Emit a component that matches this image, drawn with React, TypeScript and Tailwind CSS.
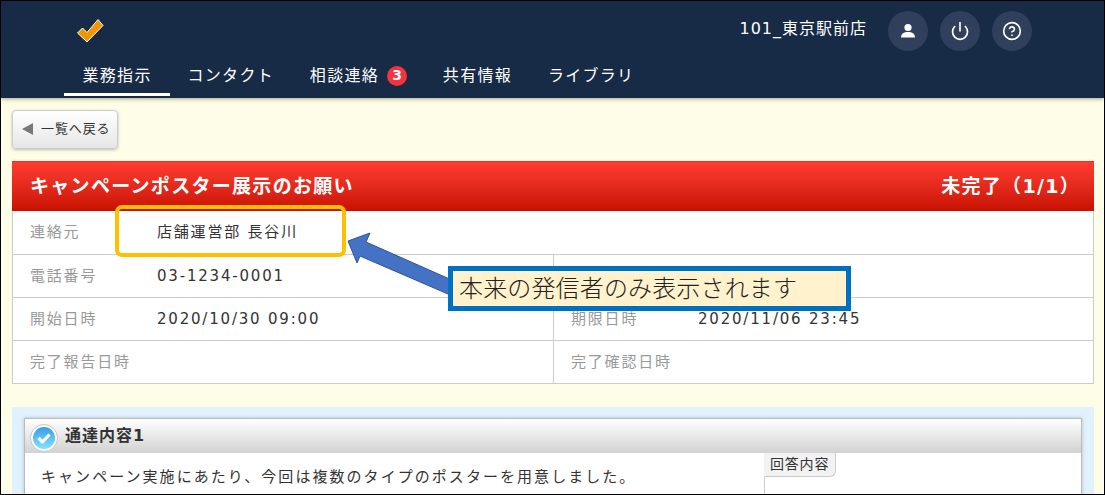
import { CircleHelp, Power } from 'lucide-react';

const font = { fontFamily: '"DejaVu Sans", "Noto Sans CJK JP", sans-serif' };

const navItems = [
  { label: '業務指示', active: true },
  { label: 'コンタクト' },
  { label: '相談連絡', badge: 3 },
  { label: '共有情報' },
  { label: 'ライブラリ' },
];

const Logo = () => (
  <svg width="28" height="25" viewBox="0 0 28 25">
    <path d="M1.5 15 L6.5 10 L11 14.5 L22 1.5 L27 7.5 L11 24 Z" fill="#f29600" stroke="#fff" strokeWidth="1" strokeLinejoin="round" />
  </svg>
);

const UserIcon = () => (
  <svg width="16" height="16" viewBox="0 0 16 16" fill="#fff">
    <circle cx="8" cy="4.5" r="3.6" />
    <path d="M1 14.5 C1 10.5 4 9 8 9 C12 9 15 10.5 15 14.5 Z" />
  </svg>
);

const Row = ({ left, right }: { left: [string, string?]; right?: [string, string?] }) => (
  <div className="flex h-[43px] border-b border-[#cccccc] first:h-[44px]">
    <div className={`flex items-center pl-[17px] ${right ? 'w-[541px] border-r border-[#cccccc]' : 'flex-1'}`}>
      <span className="w-[127px] text-[#999999]">{left[0]}</span>
      <span className="text-[#333333]">{left[1]}</span>
    </div>
    {right && (
      <div className="flex flex-1 items-center pl-[17px]">
        <span className="w-[127px] text-[#999999]">{right[0]}</span>
        <span className="text-[#333333]">{right[1]}</span>
      </div>
    )}
  </div>
);

export default function App() {
  return (
    <div
      className="relative h-[495px] w-[1105px] overflow-hidden border border-black bg-[#fefde8] text-[15px] tracking-[1.8px]"
      style={font}
    >
      {/* header */}
      <header className="h-[97px] bg-[#172a46] text-white shadow-[0_1px_4px_rgba(80,80,40,0.5)]">
        <div className="flex h-[59px] items-center justify-between pl-[75px] pr-[72px]">
          <Logo />
          <div className="flex items-center">
            <span className="mb-[3px] mr-[21px] text-[16px] tracking-[1px]">101_東京駅前店</span>
            <div className="flex gap-3">
              <button className="flex h-10 w-10 items-center justify-center rounded-full bg-[#2f3f5c]">
                <UserIcon />
              </button>
              <button className="flex h-10 w-10 items-center justify-center rounded-full bg-[#2f3f5c]">
                <Power size={20} strokeWidth={2} />
              </button>
              <button className="flex h-10 w-10 items-center justify-center rounded-full bg-[#2f3f5c]">
                <CircleHelp size={20} strokeWidth={2} />
              </button>
            </div>
          </div>
        </div>
        <nav className="flex h-[36px] pl-[63px] text-[16px] tracking-[1.3px]">
          {navItems.map((item) => (
            <div
              key={item.label}
              className={`-mr-[1.2px] flex items-center px-[18.5px] ${item.active ? 'border-b-[3px] border-white pb-[2px]' : 'pb-[5px]'}`}
            >
              {item.label}
              {item.badge && (
                <span className="ml-[8px] flex h-5 w-5 items-center justify-center rounded-full bg-[#f5333f] text-[14px] font-bold tracking-normal">
                  {item.badge}
                </span>
              )}
            </div>
          ))}
        </nav>
      </header>

      <main className="pl-[11px] pr-[10px] pt-[12px]">
        <button className="flex h-[39px] w-[106px] items-center rounded-[4px] border border-[#cccccc] bg-gradient-to-b from-white to-[#e6e6e6] pb-[2px] pl-[9px] text-[13px] tracking-[0.9px] text-[#333333] shadow-[0_1px_3px_rgba(0,0,0,0.25)]">
          <span className="mr-[8px] h-0 w-0 border-y-[6px] border-r-[11px] border-y-transparent border-r-[#777777]" />
          一覧へ戻る
        </button>

        {/* title */}
        <div className="mt-[12px] flex h-[50px] items-center justify-between border-t border-[#f02a20] bg-gradient-to-b from-[#ff3d30] to-[#c91000] px-[18px] pb-[1px] text-[19px] font-bold tracking-[1.3px] text-white">
          <span>キャンペーンポスター展示のお願い</span>
          <span className="-mr-[4px]">未完了（1/1）</span>
        </div>

        {/* details */}
        <div className="border-x border-[#cccccc] bg-white">
          <Row left={['連絡元', '店舗運営部 長谷川']} />
          <Row left={['電話番号', '03-1234-0001']} right={['']} />
          <Row left={['開始日時', '2020/10/30 09:00']} right={['期限日時', '2020/11/06 23:45']} />
          <Row left={['完了報告日時']} right={['完了確認日時']} />
        </div>

        {/* notice card */}
        <div className="mt-[23px] bg-[#e0f2fd] px-[12px] pt-[11px]">
          <div className="border border-[#bbbbbb] bg-white shadow-[0_0_4px_rgba(0,0,0,0.2)]">
            <div className="flex h-[34px] items-center bg-gradient-to-b from-white to-[#d2d2d2] pl-[5px] text-[16px] font-bold tracking-[1px] text-[#333333]">
              <svg width="28" height="30" viewBox="0 0 28 30" className="mr-[7px] mt-[4px] shrink-0">
                <defs>
                  <linearGradient id="ball" x1="0" y1="0" x2="0" y2="1">
                    <stop offset="0" stopColor="#3a9be8" />
                    <stop offset="1" stopColor="#84e2ff" />
                  </linearGradient>
                </defs>
                <circle cx="14" cy="15" r="13.5" fill="#ffffff" stroke="#c8c8c8" strokeWidth="1" />
                <circle cx="14" cy="15" r="11" fill="url(#ball)" />
                <path d="M8.5 15 L12.5 19 L19.5 11.5" fill="none" stroke="#fff" strokeWidth="3.2" strokeLinejoin="round" />
              </svg>
              通達内容1
            </div>
            <div className="flex h-[60px]">
              <p className="w-[739px] pl-[16px] pt-[13px] text-[15px] tracking-[2.05px] text-[#333333]">
                キャンペーン実施にあたり、今回は複数のタイプのポスターを用意しました。
              </p>
              <div className="flex-1">
                <div className="h-[24px] w-[72px] rounded-br-[6px] border-b border-r border-[#cccccc] bg-[#f2f2f2] pl-[6px] text-[14px] leading-[22px] tracking-[0.8px] text-[#333333]">
                  回答内容
                </div>
                <div className="h-full border-l border-[#cccccc]" />
              </div>
            </div>
          </div>
        </div>
      </main>

      {/* annotations pasted over the page */}
      <div className="absolute left-[114px] top-[204px] h-[52px] w-[231px] rounded-[7px] border-[4px] border-[#ffc000]" />
      <svg className="absolute left-[340px] top-[225px]" width="120" height="80" viewBox="0 0 120 80">
        <polygon
          points="7,15 29,7 25,16 113,55 107,68 19,30 16,37"
          fill="#4472c4"
          stroke="#2f528f"
          strokeWidth="1"
        />
      </svg>
      <div className="absolute left-[447px] top-[265px] flex h-[45px] w-[403px] items-center border-[5px] border-[#0070c0] bg-[#fff2cc] pl-[6px] text-[24px] font-light leading-none tracking-[0.15px] text-[#222222]">
        本来の発信者のみ表示されます
      </div>
    </div>
  );
}
